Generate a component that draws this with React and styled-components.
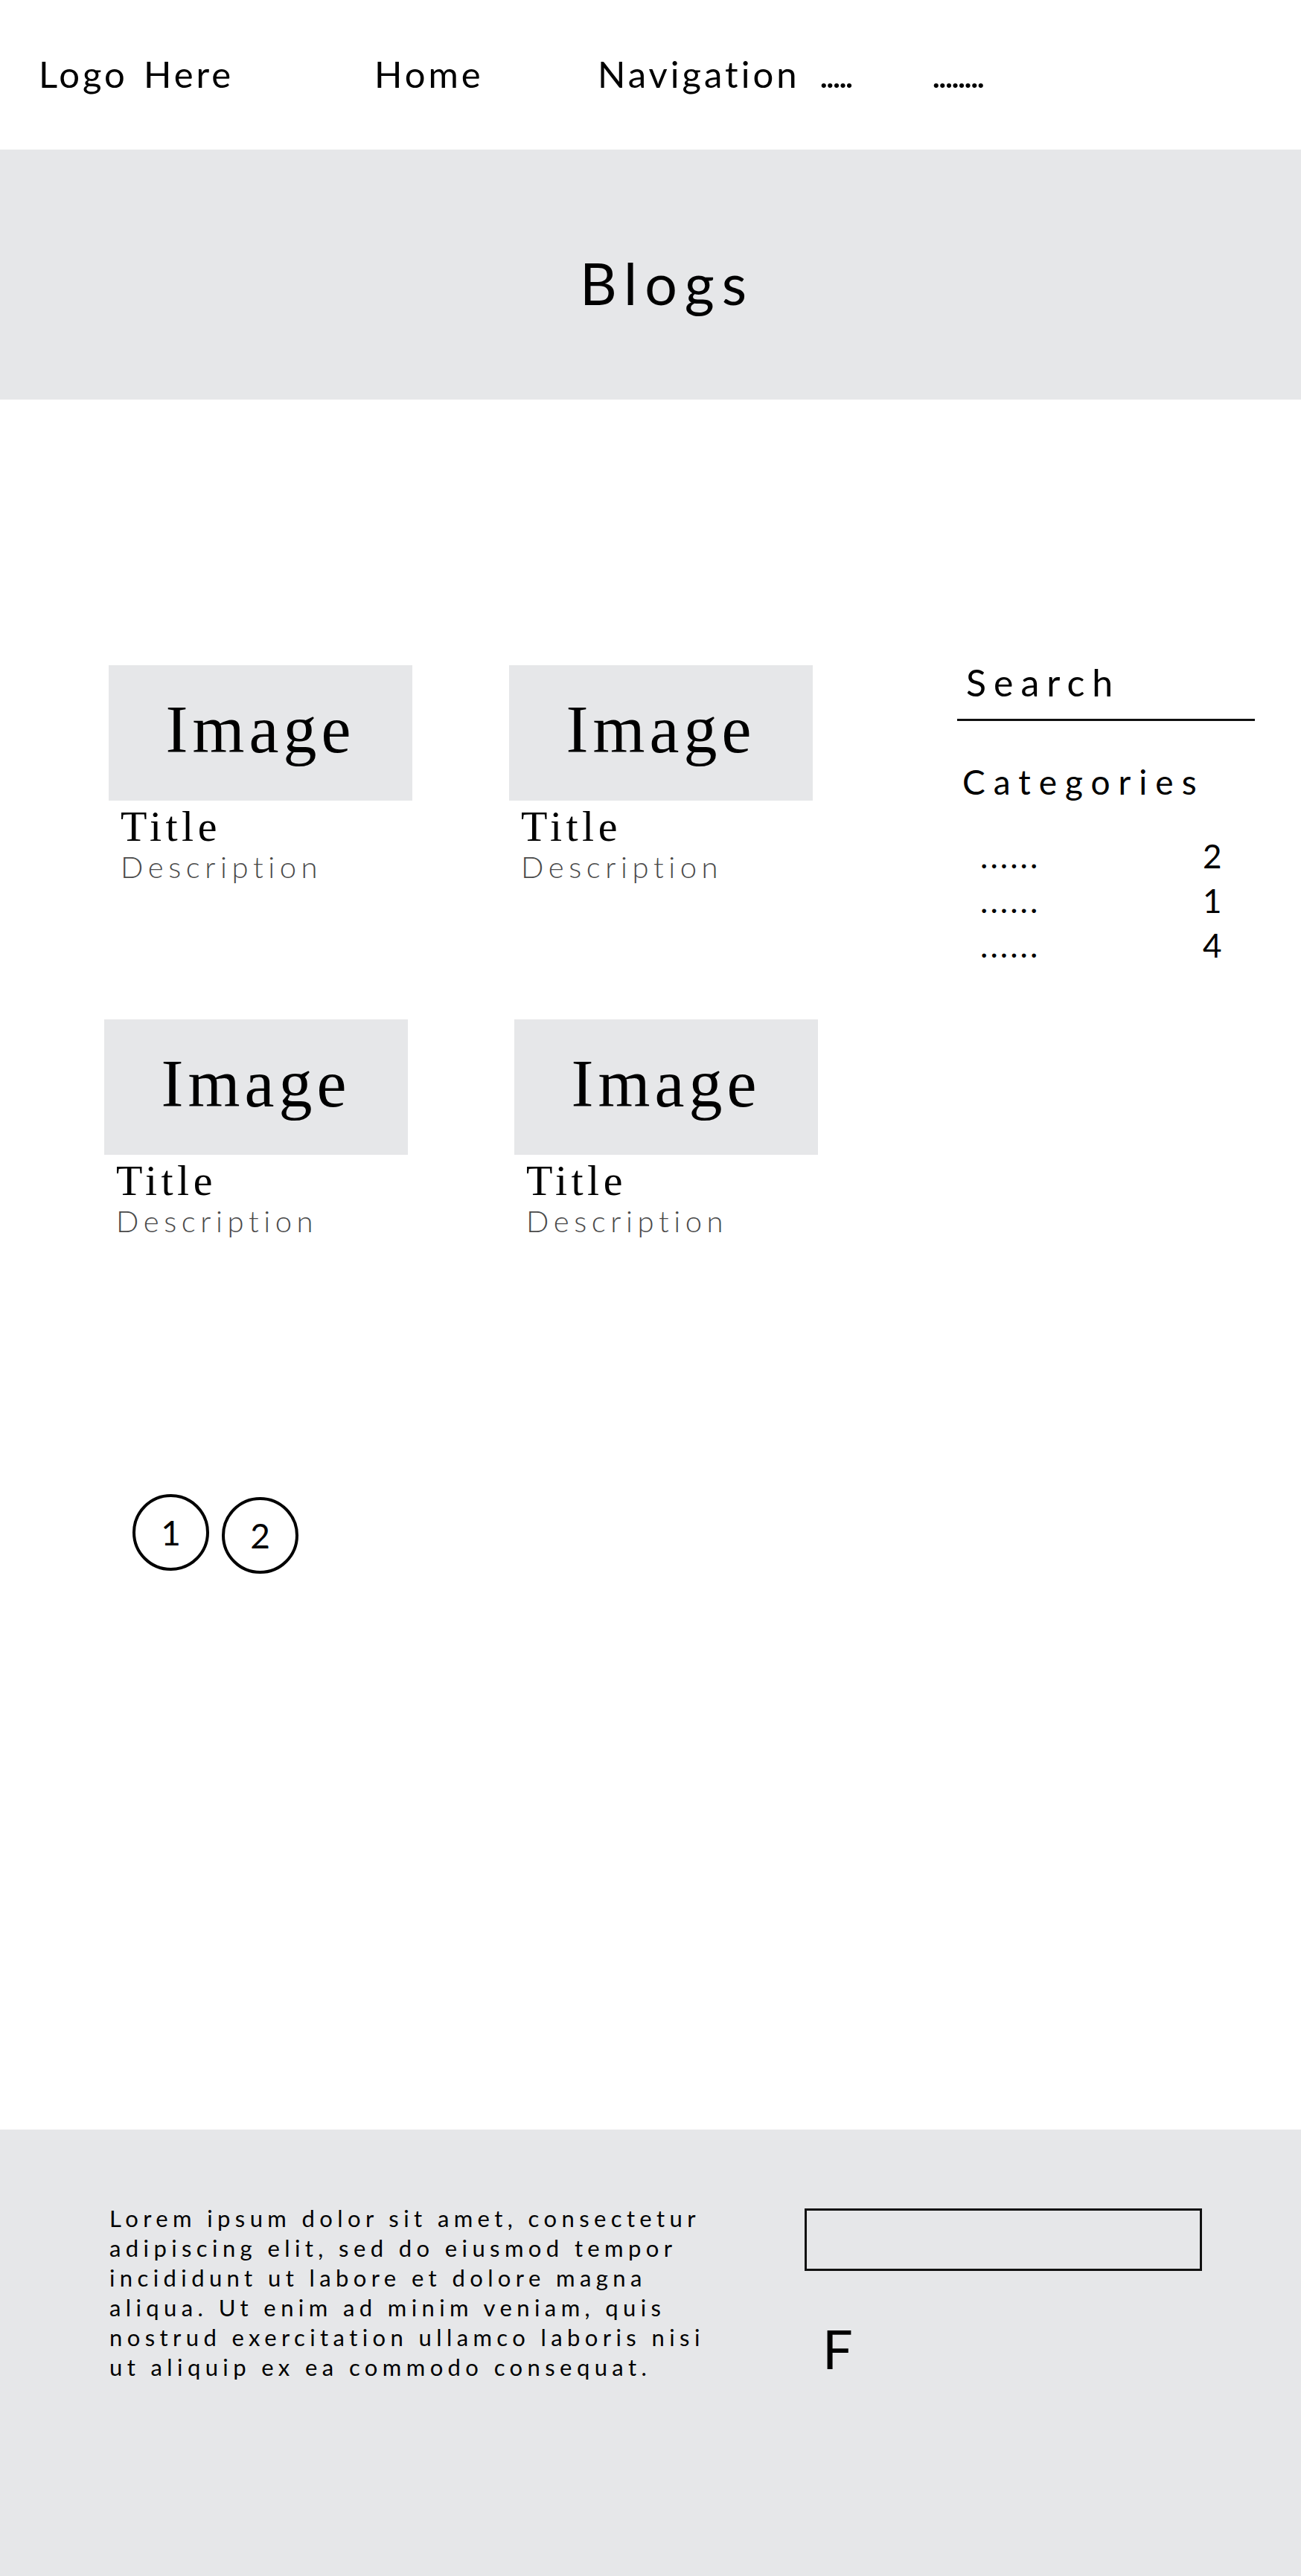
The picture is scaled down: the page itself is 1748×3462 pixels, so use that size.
import React from "react";
import styled, { createGlobalStyle } from "styled-components";

const GRAY = "#e6e7e9";

const Global = createGlobalStyle`
  html, body { margin: 0; padding: 0; background: #fff; }
  body { font-family: "Lato", "Liberation Sans", sans-serif; color: #000; }
  * { box-sizing: border-box; }
`;

const Page = styled.div`
  width: 1748px;
  display: flex;
  flex-direction: column;
`;

const Header = styled.header`
  height: 201px;
  display: flex;
  align-items: center;
  padding-left: 52px;
  padding-bottom: 2px;
`;

const NavItem = styled.a`
  display: block;
  width: ${(p) => p.$w}px;
  flex: none;
  font-size: 49px;
  line-height: 1;
  letter-spacing: ${(p) => p.$ls ?? 4}px;
  word-spacing: -6px;
  color: #000;
  text-decoration: none;
  white-space: pre;
`;

const Hero = styled.section`
  height: 336px;
  background: ${GRAY};
  display: flex;
  align-items: center;
  justify-content: center;
  padding: 22px 0 0 44px;
`;

const HeroTitle = styled.h1`
  margin: 0;
  font-size: 77px;
  font-weight: 400;
  line-height: 1;
  letter-spacing: 10px;
`;

const Main = styled.main`
  height: 2325px;
  display: flex;
  align-items: flex-start;
  padding-top: 357px;
`;

const LeftColumn = styled.div`
  width: 1286px;
  flex: none;
  display: flex;
  flex-direction: column;
`;

const CardRow = styled.div`
  display: flex;
  padding-left: ${(p) => p.$pad}px;
  gap: ${(p) => p.$gap}px;
  margin-bottom: ${(p) => p.$mb || 0}px;
`;

const Card = styled.article`
  width: 408px;
  display: flex;
  flex-direction: column;
`;

const ImageBox = styled.div`
  height: 182px;
  background: ${GRAY};
  display: flex;
  align-items: center;
  justify-content: center;
  padding-bottom: 8px;
  font-family: "Liberation Serif", "DejaVu Serif", serif;
  font-size: 90px;
  line-height: 1;
  letter-spacing: 6px;
`;

const CardTitle = styled.h2`
  margin: 6px 0 0 ${(p) => p.$indent}px;
  font-family: "Liberation Serif", "DejaVu Serif", serif;
  font-weight: 400;
  font-size: 58px;
  line-height: 1;
  letter-spacing: 5.5px;
`;

const CardDesc = styled.p`
  margin: 5px 0 0 ${(p) => p.$indent}px;
  font-weight: 300;
  font-size: 40px;
  line-height: 1;
  letter-spacing: 6.6px;
  color: #4a4a4a;
`;

const Pagination = styled.nav`
  display: flex;
  align-items: flex-start;
  gap: 17px;
  padding-left: 178px;
`;

const PageDot = styled.a`
  width: 103px;
  height: 103px;
  border: 4px solid #000;
  border-radius: 50%;
  display: flex;
  align-items: center;
  justify-content: center;
  margin-top: ${(p) => p.$offset || 0}px;
  font-size: 46px;
  line-height: 1;
  color: #000;
  text-decoration: none;
`;

const Sidebar = styled.aside`
  width: 400px;
  flex: none;
  margin-top: -2px;
  display: flex;
  flex-direction: column;
`;

const SearchField = styled.div`
  padding: 0 0 24px 12px;
  border-bottom: 3px solid #111;
  font-size: 50px;
  line-height: 1;
  letter-spacing: 10px;
`;

const SideHeading = styled.h3`
  margin: 59px 0 0 7px;
  font-size: 46px;
  font-weight: 400;
  line-height: 1;
  letter-spacing: 11px;
`;

const CatList = styled.ul`
  list-style: none;
  margin: 46px 0 0;
  padding: 0;
`;

const CatRow = styled.li`
  display: grid;
  grid-template-columns: 299px auto;
  padding-left: 31px;
  font-size: 44px;
  line-height: 60px;
`;

const Dots = styled.span`
  letter-spacing: 3px;
`;

const Footer = styled.footer`
  height: 600px;
  background: ${GRAY};
  display: grid;
  grid-template-columns: 934px 534px;
  padding: 99px 0 0 147px;
`;

const FooterText = styled.p`
  margin: 0;
  font-size: 31px;
  line-height: 40px;
  letter-spacing: 6.4px;
  white-space: nowrap;
`;

const FooterSide = styled.div`
  display: flex;
  flex-direction: column;
  padding-top: 7px;
`;

const InputBox = styled.div`
  height: 84px;
  border: 3px solid #111;
`;

const Social = styled.span`
  margin: 68px 0 0 24px;
  font-size: 72px;
  line-height: 1;
`;

const rows = [
  { pad: 146, gap: 130, mb: 185, indent: 16 },
  { pad: 140, gap: 143, mb: 347, indent: 16 },
];

const cats = [2, 1, 4];

export default function App() {
  return (
    <Page>
      <Global />
      <Header>
        <NavItem $w={451}>Logo  Here</NavItem>
        <NavItem $w={300}>Home</NavItem>
        <NavItem $w={298}>Navigation</NavItem>
        <NavItem $w={151} $ls={-3}>.....</NavItem>
        <NavItem $w={120} $ls={-3}>........</NavItem>
      </Header>
      <Hero>
        <HeroTitle>Blogs</HeroTitle>
      </Hero>
      <Main>
        <LeftColumn>
          {rows.map((r, i) => (
            <CardRow key={i} $pad={r.pad} $gap={r.gap} $mb={r.mb}>
              {[0, 1].map((j) => (
                <Card key={j}>
                  <ImageBox>Image</ImageBox>
                  <CardTitle $indent={r.indent}>Title</CardTitle>
                  <CardDesc $indent={r.indent}>Description</CardDesc>
                </Card>
              ))}
            </CardRow>
          ))}
          <Pagination>
            <PageDot>1</PageDot>
            <PageDot $offset={4}>2</PageDot>
          </Pagination>
        </LeftColumn>
        <Sidebar>
          <SearchField>Search</SearchField>
          <SideHeading>Categories</SideHeading>
          <CatList>
            {cats.map((n, i) => (
              <CatRow key={i}>
                <Dots>......</Dots>
                <span>{n}</span>
              </CatRow>
            ))}
          </CatList>
        </Sidebar>
      </Main>
      <Footer>
        <FooterText>
          Lorem ipsum dolor sit amet, consectetur
          <br />
          adipiscing elit, sed do eiusmod tempor
          <br />
          incididunt ut labore et dolore magna
          <br />
          aliqua. Ut enim ad minim veniam, quis
          <br />
          nostrud exercitation ullamco laboris nisi
          <br />
          ut aliquip ex ea commodo consequat.
        </FooterText>
        <FooterSide>
          <InputBox />
          <Social>F</Social>
        </FooterSide>
      </Footer>
    </Page>
  );
}
